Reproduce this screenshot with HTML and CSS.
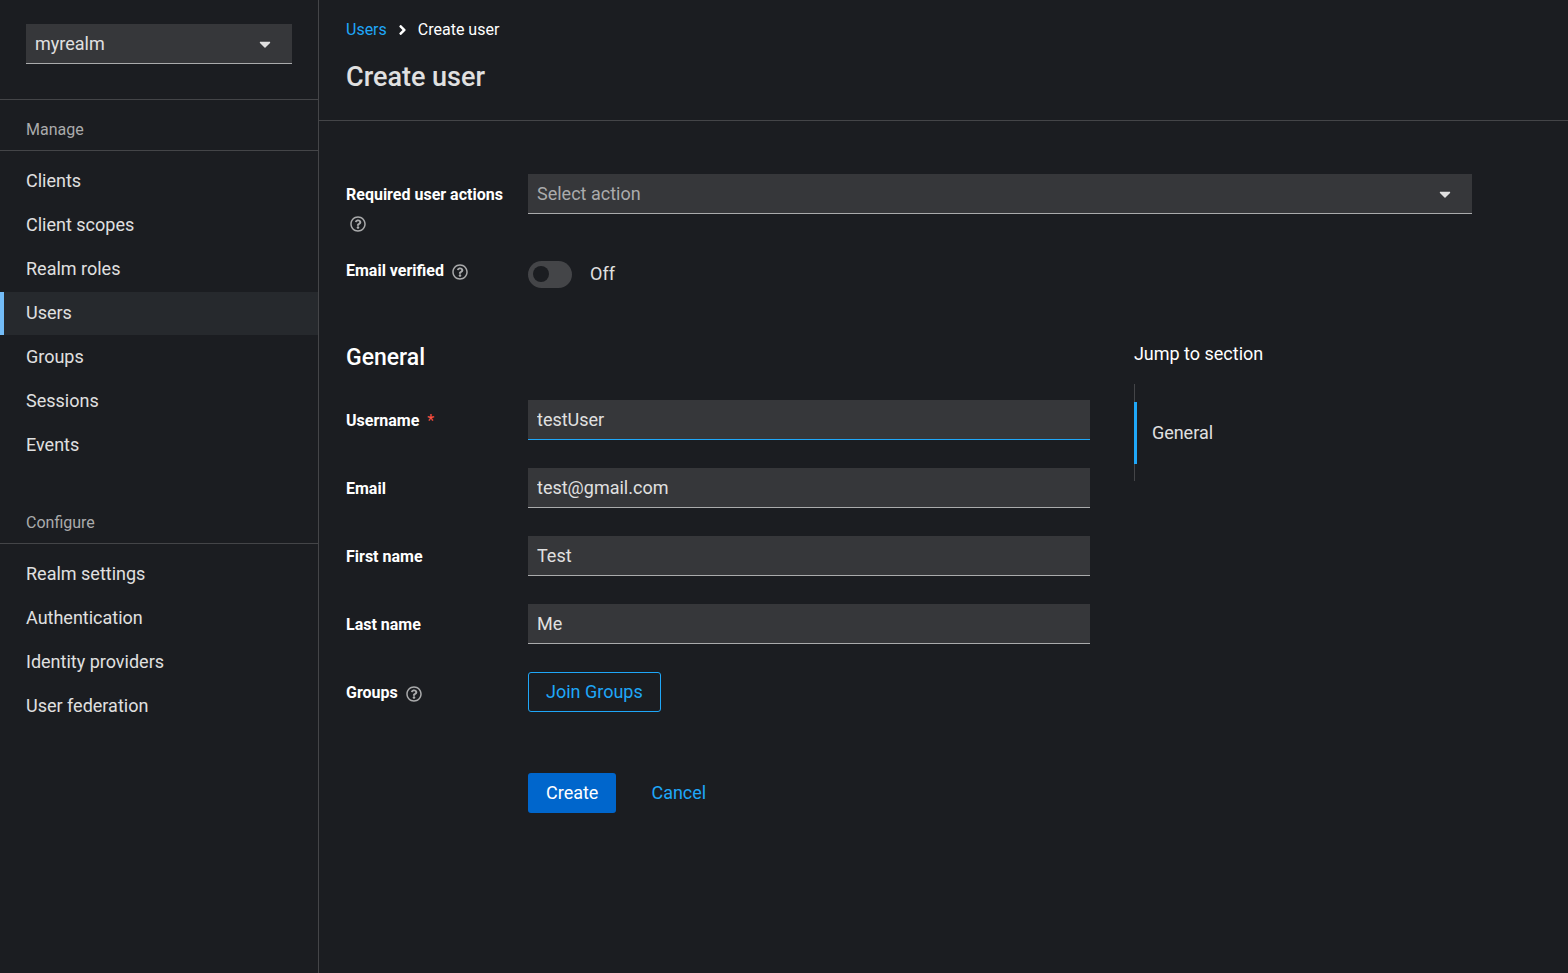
FILE: index.html
```html
<!DOCTYPE html>
<html lang="en">

<head>
    <meta charset="UTF-8">
    <meta name="viewport" content="width=device-width, initial-scale=1.0">
    <title>Create user</title>
    <link rel="stylesheet" href="styles.css">
</head>

<body>

    <!-- shared icons -->
    <svg class="icon-defs" aria-hidden="true">
        <symbol id="icon-caret" viewBox="0 0 320 512">
            <path d="M31.3 192h257.3c17.8 0 26.7 21.5 14.1 34.1L174.1 354.8c-7.8 7.8-20.5 7.8-28.3 0L17.2 226.1C4.6 213.5 13.5 192 31.3 192z" />
        </symbol>
        <symbol id="icon-angle" viewBox="0 0 256 512">
            <path d="M224.3 273l-136 136c-9.4 9.4-24.6 9.4-33.9 0l-22.6-22.6c-9.4-9.4-9.4-24.6 0-33.9l96.4-96.4-96.4-96.4c-9.4-9.4-9.4-24.6 0-33.9L54.3 103c9.4-9.4 24.6-9.4 33.9 0l136 136c9.5 9.4 9.5 24.6.1 34z" />
        </symbol>
        <symbol id="icon-help" viewBox="0 0 512 512">
            <path d="M256 8C119.043 8 8 119.083 8 256c0 136.997 111.043 248 248 248s248-111.003 248-248C504 119.083 392.957 8 256 8zm0 448c-110.532 0-200-89.431-200-200 0-110.495 89.472-200 200-200 110.491 0 200 89.471 200 200 0 110.53-89.431 200-200 200zm107.244-255.2c0 67.052-72.421 68.084-72.421 92.863V300c0 6.627-5.373 12-12 12h-45.647c-6.627 0-12-5.373-12-12v-8.659c0-35.745 27.1-50.034 47.579-61.516 17.561-9.845 28.324-16.541 28.324-29.579 0-17.246-21.999-28.693-39.784-28.693-23.189 0-33.894 10.977-48.942 29.969-4.057 5.12-11.46 6.071-16.666 2.124l-27.824-21.098c-5.107-3.872-6.251-11.066-2.644-16.363C184.846 131.491 214.94 112 261.794 112c49.071 0 101.45 38.304 101.45 88.8zM298 368c0 23.159-18.841 42-42 42s-42-18.841-42-42 18.841-42 42-42 42 18.841 42 42z" />
        </symbol>
    </svg>

    <div class="page">
        <aside class="sidebar">
            <div class="realm">
                <div class="select-box">
                    <select class="control" aria-label="Realm">
                        <option>myrealm</option>
                    </select>
                    <svg class="caret"><use href="#icon-caret" /></svg>
                </div>
            </div>

            <nav class="nav-section" aria-labelledby="nav-manage">
                <h2 class="nav-title" id="nav-manage">Manage</h2>
                <ul class="nav-list">
                    <li><a class="nav-link" href="#clients">Clients</a></li>
                    <li><a class="nav-link" href="#client-scopes">Client scopes</a></li>
                    <li><a class="nav-link" href="#roles">Realm roles</a></li>
                    <li><a class="nav-link current" href="#users" aria-current="page">Users</a></li>
                    <li><a class="nav-link" href="#groups">Groups</a></li>
                    <li><a class="nav-link" href="#sessions">Sessions</a></li>
                    <li><a class="nav-link" href="#events">Events</a></li>
                </ul>
            </nav>

            <nav class="nav-section" aria-labelledby="nav-configure">
                <h2 class="nav-title" id="nav-configure">Configure</h2>
                <ul class="nav-list">
                    <li><a class="nav-link" href="#realm-settings">Realm settings</a></li>
                    <li><a class="nav-link" href="#authentication">Authentication</a></li>
                    <li><a class="nav-link" href="#identity-providers">Identity providers</a></li>
                    <li><a class="nav-link" href="#user-federation">User federation</a></li>
                </ul>
            </nav>
        </aside>

        <main class="main">
            <header class="page-header">
                <nav class="breadcrumb" aria-label="Breadcrumb">
                    <a href="#users">Users</a>
                    <svg class="angle"><use href="#icon-angle" /></svg>
                    <span>Create user</span>
                </nav>
                <h1>Create user</h1>
            </header>

            <form class="user-form">
                <div class="form-row top-row">
                    <div class="label-cell">
                        <label for="actions">Required user actions</label>
                        <button type="button" class="help" aria-label="Help for required user actions"><svg><use href="#icon-help" /></svg></button>
                    </div>
                    <div class="select-box">
                        <select class="control placeholder" id="actions">
                            <option>Select action</option>
                        </select>
                        <svg class="caret"><use href="#icon-caret" /></svg>
                    </div>
                </div>

                <div class="form-row switch-row">
                    <div class="label-cell">
                        <label for="verified">Email verified</label>
                        <button type="button" class="help" aria-label="Help for email verified"><svg><use href="#icon-help" /></svg></button>
                    </div>
                    <div class="switch">
                        <input type="checkbox" role="switch" id="verified">
                        <span>Off</span>
                    </div>
                </div>

                <div class="columns">
                    <section class="fields" id="general">
                        <h2>General</h2>
                        <div class="form-row">
                            <div class="label-cell">
                                <label for="username">Username <span class="required">*</span></label>
                            </div>
                            <input class="control active" type="text" id="username" value="testUser" required>
                        </div>
                        <div class="form-row">
                            <div class="label-cell"><label for="email">Email</label></div>
                            <input class="control" type="email" id="email" value="test@gmail.com">
                        </div>
                        <div class="form-row">
                            <div class="label-cell"><label for="firstName">First name</label></div>
                            <input class="control" type="text" id="firstName" value="Test">
                        </div>
                        <div class="form-row">
                            <div class="label-cell"><label for="lastName">Last name</label></div>
                            <input class="control" type="text" id="lastName" value="Me">
                        </div>
                        <div class="form-row">
                            <div class="label-cell">
                                <label for="joinGroups">Groups</label>
                                <button type="button" class="help" aria-label="Help for groups"><svg><use href="#icon-help" /></svg></button>
                            </div>
                            <div><button type="button" class="btn btn-outline" id="joinGroups">Join Groups</button></div>
                        </div>
                        <div class="actions">
                            <button type="submit" class="btn btn-primary">Create</button>
                            <button type="button" class="btn btn-link">Cancel</button>
                        </div>
                    </section>

                    <nav class="jump" aria-labelledby="jump-title">
                        <h2 id="jump-title">Jump to section</h2>
                        <ul>
                            <li><a href="#general">General</a></li>
                        </ul>
                    </nav>
                </div>
            </form>
        </main>
    </div>

</body>

</html>
```
FILE: styles.css
```css
* {
    box-sizing: border-box;
}

body {
    margin: 0;
    background-color: #1b1d21;
    color: #e0e0e0;
    font-family: Roboto, "Liberation Sans", sans-serif;
    font-size: 18px;
    line-height: 28px;
}

h1,
h2,
ul {
    margin: 0;
    padding: 0;
    font-weight: 400;
    list-style: none;
}

a {
    color: #1fa7f8;
    text-decoration: none;
}

svg {
    display: block;
    fill: currentColor;
}

.icon-defs {
    display: none;
}

.page {
    display: flex;
    min-height: 100vh;
}

/* sidebar */

.sidebar {
    flex: 0 0 319px;
    border-right: 1px solid #444548;
}

.realm {
    padding: 24px 26px 35px;
    border-bottom: 1px solid #444548;
}

.nav-section {
    padding-bottom: 25px;
}

.nav-title {
    padding: 18px 26px 8px;
    border-bottom: 1px solid #444548;
    color: #aaabac;
    font-size: 16px;
    line-height: 24px;
}

.nav-list {
    padding-top: 9px;
}

.nav-link {
    display: block;
    padding: 7px 26px 8px;
    margin-bottom: 1px;
    color: #e0e0e0;
}

.nav-link.current {
    padding-left: 22px;
    border-left: 4px solid #73bcf7;
    background-color: #26292d;
}

/* inputs */

.control {
    width: 100%;
    height: 40px;
    padding: 0 9px;
    border: none;
    border-bottom: 1px solid #aaabac;
    border-radius: 0;
    outline: none;
    background-color: #36373a;
    color: #e0e0e0;
    font: inherit;
    appearance: none;
}

.control.placeholder {
    color: #aaabac;
}

.control.active,
.control:focus {
    border-bottom-color: #1fa7f8;
}

.select-box {
    position: relative;
}

.caret {
    position: absolute;
    top: 11px;
    right: 21px;
    width: 12px;
    height: 18px;
    pointer-events: none;
}

/* main */

.main {
    flex: 1;
    min-width: 0;
}

.page-header {
    padding: 18px 27px 25px;
    border-bottom: 1px solid #444548;
}

.breadcrumb {
    display: flex;
    align-items: center;
    gap: 11px;
    margin-bottom: 17px;
    color: #fff;
    font-size: 16px;
    line-height: 24px;
}

.angle {
    width: 9px;
    height: 16px;
}

h1 {
    font-size: 27px;
    font-weight: 500;
    line-height: 36px;
}

.user-form {
    padding: 53px 96px 53px 27px;
}

.form-row {
    display: grid;
    grid-template-columns: 182px 1fr;
    margin-bottom: 28px;
}

.top-row {
    margin-bottom: 20px;
}

.switch-row {
    margin-bottom: 52px;
}

.label-cell {
    padding-top: 7px;
    padding-right: 20px;
    color: #fff;
    font-size: 16px;
    font-weight: 700;
}

.switch-row .label-cell {
    padding-top: 0;
}

.required {
    margin-left: 4px;
    color: #fe5142;
    font-weight: 400;
}

.help {
    margin-left: 4px;
    padding: 0;
    border: none;
    background: none;
    color: #aaabac;
    vertical-align: middle;
    cursor: pointer;
}

.help svg {
    width: 16px;
    height: 16px;
}

.switch {
    display: flex;
    align-items: center;
    gap: 18px;
    padding-top: 3px;
}

.switch input {
    width: 44px;
    height: 27px;
    margin: 0;
    padding: 5px;
    border-radius: 14px;
    background-color: #444548;
    appearance: none;
    cursor: pointer;
}

.switch input::before {
    content: "";
    display: block;
    width: 16px;
    height: 16px;
    border-radius: 50%;
    background-color: #1b1d21;
}

.switch input:checked {
    background-color: #06c;
}

.switch input:checked::before {
    margin-left: auto;
}

.columns {
    display: grid;
    grid-template-columns: 11fr 5fr;
    gap: 44px;
}

.fields h2 {
    margin-bottom: 24px;
    color: #fff;
    font-size: 23px;
    font-weight: 500;
    line-height: 36px;
}

.btn {
    height: 40px;
    padding: 0 17px;
    border: 1px solid transparent;
    border-radius: 3px;
    background: none;
    font: inherit;
    cursor: pointer;
}

.btn-outline {
    border-color: #1fa7f8;
    color: #1fa7f8;
}

.btn-primary {
    background-color: #06c;
    color: #fff;
}

.btn-link {
    color: #1fa7f8;
}

.actions {
    display: flex;
    gap: 17px;
    padding: 33px 0 0 182px;
}

/* jump links */

.jump h2 {
    margin-bottom: 16px;
    color: #fff;
    font-size: 18px;
}

.jump ul {
    padding: 18px 0 17px;
    border-left: 1px solid #444548;
}

.jump a {
    display: block;
    margin-left: -1px;
    padding: 17px 15px;
    border-left: 3px solid #1fa7f8;
    color: #e0e0e0;
}
```
